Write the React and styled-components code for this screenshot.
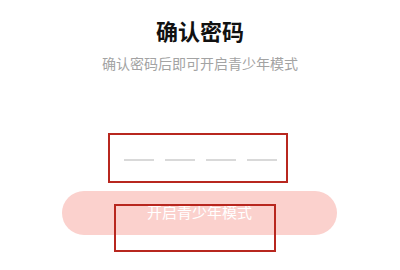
import React from "react";
import styled, { createGlobalStyle } from "styled-components";

const Global = createGlobalStyle`
  html, body { margin: 0; padding: 0; background: #ffffff; }
  body { font-family: "Noto Sans CJK SC", "Noto Sans", sans-serif; }
`;

const Page = styled.div`
  width: 400px;
  height: 270px;
  display: flex;
  flex-direction: column;
  align-items: center;
  box-sizing: border-box;
  padding-top: 15px;
  overflow: hidden;
`;

const Title = styled.h1`
  margin: 0;
  font-size: 22px;
  line-height: 30px;
  font-weight: 700;
  color: #111111;
  letter-spacing: 0;
`;

const Subtitle = styled.p`
  margin: 8px 0 0;
  font-size: 14px;
  line-height: 20px;
  color: #a3a3a3;
`;

const CodeBox = styled.div`
  margin-top: 60px;
  margin-left: -4px;
  width: 180px;
  height: 50px;
  box-sizing: border-box;
  border: 2px solid #b8271f;
  display: flex;
  align-items: center;
  justify-content: center;
  gap: 11px;
  padding: 4px 0 0 4px;
`;

const Dash = styled.span`
  width: 30px;
  height: 1.5px;
  background: #d9d9d9;
`;

const ButtonWrap = styled.div`
  position: relative;
  margin-top: 8px;
  margin-left: -1px;
`;

const Button = styled.button`
  width: 275px;
  height: 44px;
  border: none;
  border-radius: 22px;
  background: #fbd1cd;
  color: #ffffff;
  font-family: inherit;
  font-size: 15px;
  line-height: 20px;
  padding: 0 0 2px;
  display: flex;
  align-items: center;
  justify-content: center;
`;

const Marker = styled.div`
  position: absolute;
  left: 52px;
  top: 13px;
  width: 162px;
  height: 48px;
  box-sizing: border-box;
  border: 2px solid #b8271f;
  pointer-events: none;
`;

export default function App() {
  return (
    <>
      <Global />
      <Page>
        <Title>确认密码</Title>
        <Subtitle>确认密码后即可开启青少年模式</Subtitle>
        <CodeBox>
          <Dash />
          <Dash />
          <Dash />
          <Dash />
        </CodeBox>
        <ButtonWrap>
          <Button>开启青少年模式</Button>
          <Marker />
        </ButtonWrap>
      </Page>
    </>
  );
}
